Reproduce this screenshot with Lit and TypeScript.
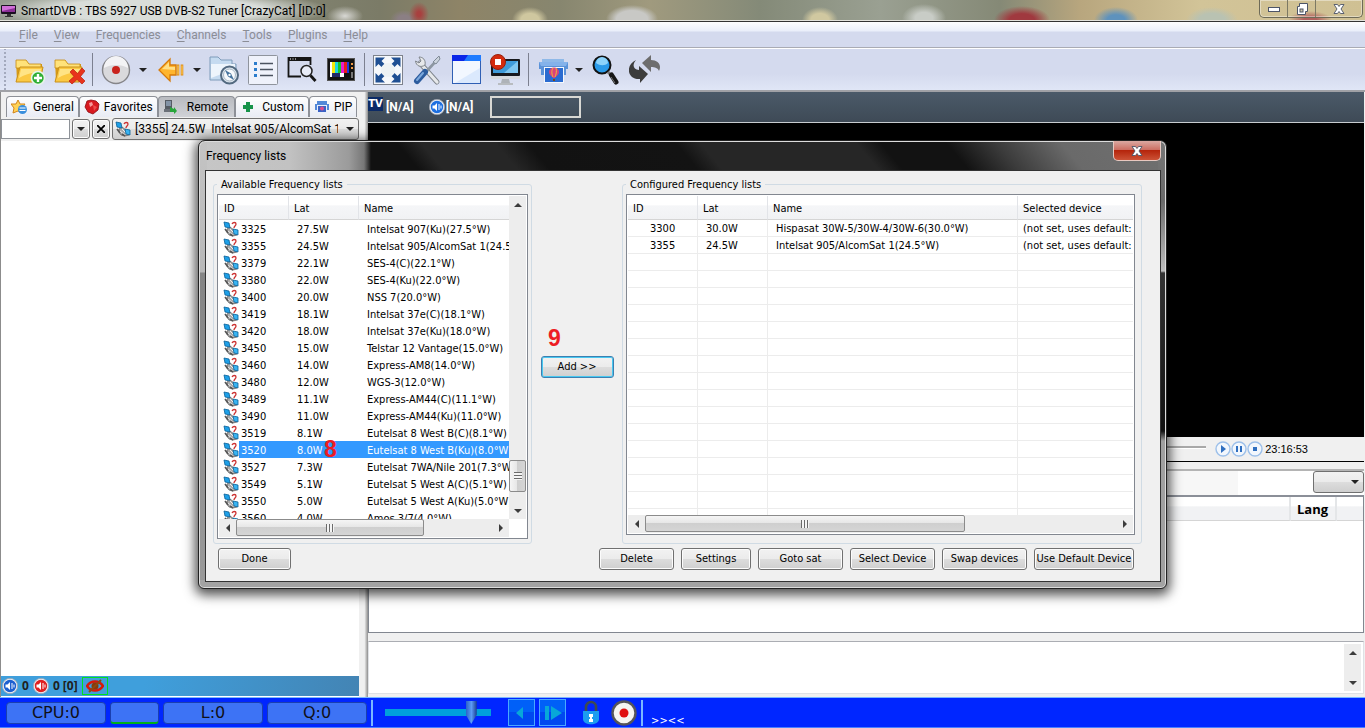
import { LitElement, html, css, svg, nothing, TemplateResult } from "lit";
import { customElement } from "lit/decorators.js";
import { classMap } from "lit/directives/class-map.js";

type Row = [string, string, string];

const AVAILABLE: Row[] = [
  ["3325", "27.5W", "Intelsat 907(Ku)(27.5°W)"],
  ["3355", "24.5W", "Intelsat 905/AlcomSat 1(24.5°W)"],
  ["3379", "22.1W", "SES-4(C)(22.1°W)"],
  ["3380", "22.0W", "SES-4(Ku)(22.0°W)"],
  ["3400", "20.0W", "NSS 7(20.0°W)"],
  ["3419", "18.1W", "Intelsat 37e(C)(18.1°W)"],
  ["3420", "18.0W", "Intelsat 37e(Ku)(18.0°W)"],
  ["3450", "15.0W", "Telstar 12 Vantage(15.0°W)"],
  ["3460", "14.0W", "Express-AM8(14.0°W)"],
  ["3480", "12.0W", "WGS-3(12.0°W)"],
  ["3489", "11.1W", "Express-AM44(C)(11.1°W)"],
  ["3490", "11.0W", "Express-AM44(Ku)(11.0°W)"],
  ["3519", "8.1W", "Eutelsat 8 West B(C)(8.1°W)"],
  ["3520", "8.0W", "Eutelsat 8 West B(Ku)(8.0°W)"],
  ["3527", "7.3W", "Eutelsat 7WA/Nile 201(7.3°W)"],
  ["3549", "5.1W", "Eutelsat 5 West A(C)(5.1°W)"],
  ["3550", "5.0W", "Eutelsat 5 West A(Ku)(5.0°W)"],
  ["3560", "4.0W", "Amos 3/7(4.0°W)"],
];

const CONFIGURED: Row[] = [
  ["3300", "30.0W", "Hispasat 30W-5/30W-4/30W-6(30.0°W)"],
  ["3355", "24.5W", "Intelsat 905/AlcomSat 1(24.5°W)"],
];

const EMPTY_ROWS = Array.from({ length: 16 });

const icon = (size: number, body: TemplateResult) =>
  html`<svg class="ico" width=${size} height=${size} viewBox="0 0 ${size} ${size}" aria-hidden="true">${body}</svg>`;

const satellite = () => icon(16, svg`
  <path d="M4 8l3-2 4 3 3 5-4 1-4-1-2-3z" fill="#a9a9a9" stroke="#666" stroke-width=".8"/>
  <path d="M5 10l5 4M7 8l5 5" stroke="#eee" stroke-width="1"/>
  <path d="M1 1l5 1 1 5-5-1z" fill="#1ea0e8" stroke="#0a5f96" stroke-width=".8"/>
  <path d="M10 8l5 1v5l-4-1z" fill="#39b4f2" stroke="#0a5f96" stroke-width=".8"/>
  <path d="M9 3c1-2 4-2 4 0s-2 2-2 4" fill="none" stroke="#c33" stroke-width="1.300"/>
  <path d="M2 8l3 4M7 13l3 2" stroke="#555" stroke-width="1.600"/>`);

const folder = svg`
  <path d="M2 6h10l3 4h13v18H3z" fill="#d99b14"/>
  <path d="M2 6h10l3 4h12v4H2z" fill="#ffe27a" stroke="#c58a10" stroke-width=".8"/>
  <path d="M2 28L6 13h23l-3 15z" fill="#fbc944" stroke="#c8901a"/>
  <path d="M5 24l2-9h20l-1 4c-8-1-14 1-21 5z" fill="#ffe486"/>`;

const icons = {
  folderAdd: icon(32, svg`${folder}
    <circle cx="24" cy="24" r="6.5" fill="#2fae35" stroke="#e8f4e8" stroke-width="1.6"/>
    <path d="M24 20v8M20 24h8" stroke="#fff" stroke-width="2.4"/>`),
  folderDelete: icon(32, svg`${folder}
    <path d="M17 18l3-3 4.500 4.500L29 14l3 3-4.500 5.500L32 27l-3 3-5-4.500L19 30l-3-3 5-4.500z" fill="#e8331c" stroke="#b81f10" stroke-width=".7"/>`),
  record: icon(32, svg`
    <circle cx="16" cy="16" r="13.500" fill="#d9d9dc" stroke="#858589" stroke-width="1.400"/>
    <path d="M4 14a12 12 0 0 1 24 0c-7-4-17-4-24 0z" fill="#f3f3f5"/>
    <circle cx="16" cy="16" r="4" fill="#c9231c"/>`),
  back: icon(32, svg`
    <path d="M5 16L16 5v6h6v10h-6v6z" fill="#ffb52e" stroke="#d67a0a" stroke-width="1.300"/>
    <path d="M8 15l7-7v5h6v3z" fill="#ffdf86"/>
    <path d="M24 10.500v11M28 10.500v11" stroke="#e08d14" stroke-width="2.600"/>
    <path d="M24 11.500v9M28 11.500v9" stroke="#ffd265"/>`),
  folderCompass: icon(32, svg`
    <path d="M2 3h8l3 3h11v4h4v16H2z" fill="#c5dbf0" stroke="#7f9cba"/>
    <path d="M3 10h24v5L3 24z" fill="#edf5fc"/>
    <circle cx="21.500" cy="21" r="8.500" fill="#dfe8f0" stroke="#536a80" stroke-width="2"/>
    <circle cx="21.500" cy="21" r="6" fill="#f7fafc" stroke="#a9b8c5"/>
    <path d="M17 16l6 3.500L26 26l-6-3.500z" fill="#46749e"/><circle cx="21.500" cy="21" r="1.200" fill="#fff"/>`),
  list: icon(32, svg`
    <rect x="1.500" y="1.500" width="29" height="29" rx="1" fill="#eff2fb" stroke="#8f949d"/>
    <path d="M7 8h3v3H7zM7 14h3v3H7zM7 20h3v3H7z" fill="#2b7ccc"/>
    <path d="M13 9.500h13M13 15.500h13M13 21.500h13" stroke="#4b5360" stroke-width="1.500"/>`),
  findWindow: icon(32, svg`
    <path d="M15 22.500H2.500V4h22v7" fill="none" stroke="#151515" stroke-width="1.800"/>
    <path d="M2 3h23v4H2z" fill="#151515"/><path d="M4 5h1M6.500 5h1M9 5h1" stroke="#fff"/>
    <circle cx="20.500" cy="17" r="5.500" fill="#e8ecf8" stroke="#222" stroke-width="1.500"/>
    <path d="M24.500 21.500l5 5.500" stroke="#151515" stroke-width="2.800"/>`),
  tv: icon(32, svg`
    <rect x="2.500" y="4.500" width="27" height="22" fill="#141414" stroke="#555"/>
    <rect x="5" y="8" width="19" height="15" fill="#fff"/>
    <path d="M7 8h3v11H7z" fill="#f4e90a"/><path d="M10 8h3v11h-3z" fill="#1fd5e0"/><path d="M13 8h3v11h-3z" fill="#18c52c"/>
    <path d="M16 8h3v11h-3z" fill="#e41bd0"/><path d="M19 8h3v11h-3z" fill="#ea1c1c"/><path d="M22 8h2v11h-2z" fill="#1f35e0"/>
    <path d="M7 19h8v4H7z" fill="#222a66"/><path d="M19 19h5v4h-5z" fill="#111"/><path d="M26 9h2v2h-2zM26 13h2v2h-2z" fill="#e94"/><path d="M26 18h2v6h-2z" fill="#777"/>`),
  fullscreen: icon(32, svg`
    <rect x="1.500" y="1.500" width="29" height="29" fill="#f6f8fb" stroke="#7d828c"/>
    <path d="M3.500 3.500H13l-3.500 3.500 3 3-3 3-3-3L3.500 13z" fill="#1f4f93"/>
    <path d="M28.500 3.500H19l3.500 3.500-3 3 3 3 3-3 3 3z" fill="#1f4f93"/>
    <path d="M3.500 28.500V19l3 3 3-3 3 3-3 3 3.500 3.500z" fill="#1f4f93"/>
    <path d="M28.500 28.500V19l-3 3-3-3-3 3 3 3-3.500 3.500z" fill="#1f4f93"/>
    <circle cx="16" cy="16" r="7" fill="#eef2f4"/>`),
  tools: icon(32, svg`
    <path d="M9 9L26 28" stroke="#7f858c" stroke-width="5" stroke-linecap="round"/>
    <path d="M9 9L26 28" stroke="#e6e8ea" stroke-width="3.200" stroke-linecap="round"/>
    <path d="M8 3c4 0 7 3 6 8-4 3-9 1-9.500-4l3.500 2 2-2z" fill="#e6e8ea" stroke="#7f858c"/>
    <path d="M26 6L14 19" stroke="#8d97a2" stroke-width="2.600"/>
    <path d="M28 2l1 3-4 5-3-2z" fill="#ccd4de" stroke="#7f8a96"/>
    <path d="M14 18L6 27" stroke="#2c5c9e" stroke-width="6" stroke-linecap="round"/>
    <path d="M12 19l-6 7" stroke="#7ba8dc" stroke-width="2" stroke-linecap="round"/>`),
  window: icon(32, svg`
    <rect x="2.500" y="1.500" width="28" height="28" fill="#f2f7ff" stroke="#2f5fb4"/>
    <path d="M2 1h29v6H2z" fill="#0a26e8"/><path d="M18 1h13v6H14z" fill="#1f7bff"/>
    <path d="M5 29L30 14v15z" fill="#dbe9fd"/>`),
  monitorStop: icon(32, svg`
    <rect x="2" y="5" width="29" height="17" rx="1" fill="#17191c"/>
    <path d="M4 7h25v12H4z" fill="#3f9bd8"/><path d="M29 7v12H15z" fill="#7fc6ee"/>
    <path d="M2 22h29v3H2z" fill="#d7dadd"/><path d="M13 25h7l1 4h-9z" fill="#aeb3b8"/><path d="M9 30h15" stroke="#b8bcc0" stroke-width="2"/>
    <circle cx="9" cy="8" r="7.500" fill="#d42b0d" stroke="#97200c"/><rect x="6" y="5" width="6" height="6" fill="#fff"/>`),
  pictures: icon(32, svg`
    <path d="M6 5h22v9H6z" fill="#8fb9e8"/><path d="M3 8h29v7h-2v6H5v-6H3z" fill="#5b92d8"/><path d="M3 8h29l-2 4H5z" fill="#84b2ea"/>
    <rect x="8.500" y="13.500" width="19" height="15" fill="#2a6bd0" stroke="#f5f8fc"/>
    <path d="M13 18a5 4.500 0 0 1 10 0c0 3-3 4-4 6h-2c-1-2-4-3-4-6z" fill="#d8437c"/><path d="M17 14c-2 3-1 7 0 9M20 14c1 3 0 7-1 9" stroke="#f2b53a" fill="none"/>
    <path d="M17 25h2v2h-2z" fill="#7a4a18"/>`),
  magnifier: icon(32, svg`
    <circle cx="12" cy="11" r="8.500" fill="#2a9ae8" stroke="#121212" stroke-width="2"/>
    <path d="M6 9a6 6 0 0 1 12 0c-3 3-8 3-12 0z" fill="#8cd3fa"/>
    <path d="M18 18l3 3" stroke="#777" stroke-width="3"/>
    <path d="M21.500 21l4.500 7" stroke="#161616" stroke-width="5" stroke-linecap="round"/><path d="M21 23l4 6" stroke="#777"/>`),
  sync: icon(32, svg`
    <path d="M13 9l9-8v5c7 0 11 5 8 11-1-3-4-4-8-4v5z" fill="#6d6d6d"/>
    <path d="M7 6c-4 5-3 9 3 10v-4l9 8-8 9v-4C-2 26-4 11 7 6z" fill="#3c3c3c"/>`),
};

const small = {
  star: icon(18, svg`<path d="M7 2l2 4 5 0-3 4 1 5-5-2-5 2 1-5-3-4h5z" fill="#ffd257" stroke="#d2851b"/><circle cx="11.500" cy="11.500" r="4.500" fill="#3a8fdd"/><path d="M8.500 10h6M8.500 12.500h6" stroke="#fff"/>`),
  shield: icon(16, svg`<path d="M3 2l4-1 5 1 3 3-1 6-5 4-5-2-3-5z" fill="#d81a20" stroke="#8c0a10" stroke-width=".8"/><path d="M5 4l3-1 1 3-3 2z" fill="#f79a9a"/><path d="M9 6l4 2-3 4z" fill="#f04a4a"/>`),
  remote: icon(16, svg`<rect x="2" y="1" width="7" height="9" fill="#555b63"/><path d="M3 2h5v5H3z" fill="#8393a6"/><path d="M1 10h9v3H1z" fill="#6c7179"/><path d="M7 8l4 2v-2l3 4-3 3v-2H7z" fill="#27a53a"/>`),
  plus: icon(16, svg`<path d="M6 3h4v3h3v4h-3v3H6v-3H3V6h3z" fill="#17934a"/>`),
  pip: icon(16, svg`<path d="M3 2h10v3h2v6H1V5h2z" fill="#5289d8"/><rect x="3.500" y="6.500" width="9" height="7" fill="#3b62c4" stroke="#e8effa"/><circle cx="8" cy="9.500" r="2" fill="#dc4f8d"/>`),
};

const speaker = (color: string, light: string) => icon(16, svg`
  <circle cx="8" cy="8" r="7" fill=${color} stroke="#eef2f8" stroke-width="1.600"/>
  <circle cx="8" cy="8" r="7.600" fill="none" stroke="#8a8f99" stroke-width=".6"/>
  <path d="M3.500 6.500h2L8 4v8L5.500 9.500h-2z" fill="#fff"/><path d="M10 5v6M12 6.500v3" stroke=${light}/>`);

const media = (label: string, glyph: TemplateResult) => html`<button class="media" aria-label=${label}>${icon(16, svg`
  <circle cx="8" cy="8" r="7" fill="#f2f7fd" stroke="#9dc0ea" stroke-width="1.400"/>${glyph}`)}</button>`;

const closeGlyph = html`<svg class="ico" width="12" height="10" viewBox="0 0 12 10" aria-hidden="true">
  <path d="M1 .5h3.500L6 2.500 7.500.5H11L8 5l3 4.500H7.500L6 7.500 4.500 9.500H1L4 5z" fill="#fff" stroke="#4d5568" stroke-width=".9"/></svg>`;

const scrollArrow = (d: string) => html`<button class="arrow" aria-label="Scroll"><svg class="ico" width="8" height="8" viewBox="0 0 8 8" aria-hidden="true"><path d=${d} fill="#3c3c3c"/></svg></button>`;
const UP = "M0 6l4-4 4 4z", DOWN = "M0 2h8L4 6z", LEFT = "M6 0v8L2 4z", RIGHT = "M2 0l4 4-4 4z";

@customElement("app-root")
export class AppRoot extends LitElement {
  static styles = css`
    :host {
      --seg: Roboto, "Open Sans", sans-serif;
      --tah: "DejaVu Sans Condensed", "Noto Sans", sans-serif;
      display: flex; flex-direction: column; position: relative;
      height: 100vh; overflow: hidden; box-sizing: border-box;
      font: 12px/16px var(--seg); color: #000; background: #f0f0f0;
    }
    * { box-sizing: border-box; }
    button, input, select { font: inherit; color: inherit; margin: 0; padding: 0; border-radius: 0; }
    button { border: 0; background: none; }
    .ico { display: block; flex: none; }
    .caret { flex: none; width: 0; height: 0; border: 4px solid transparent; border-top-color: #222; border-bottom: 0; }

    .titlebar {
      flex: none; height: 22px; display: flex; align-items: center; gap: 4px; padding-left: 1px;
      border-bottom: 1px solid #333; box-shadow: inset 0 -1px #e2e2dc;
      background:
        radial-gradient(ellipse 170px 20px at 160px 10px, #d9ddd9 60%, #d9ddd900),
        radial-gradient(ellipse 18px 10px at 345px 16px, #d8d8d4, #d8d8d400),
        radial-gradient(ellipse 10px 12px at 419px 14px, #a8403f 20%, #a8403f00),
        radial-gradient(ellipse 14px 9px at 404px 19px, #8b7f84 40%, #8b7f8400),
        radial-gradient(ellipse 18px 13px at 530px 20px, #cfc79f 50%, #cfc79f00),
        radial-gradient(ellipse 26px 14px at 632px 19px, #c8c8c5 60%, #c8c8c500),
        radial-gradient(ellipse 18px 13px at 820px 20px, #d0c8a0 50%, #d0c8a000),
        radial-gradient(ellipse 22px 14px at 924px 18px, #c8ccc6 40%, #c8ccc600),
        radial-gradient(ellipse 28px 14px at 1022px 20px, #a0393f 45%, #a0393f00),
        radial-gradient(ellipse 22px 13px at 1116px 20px, #5e92bd 40%, #5e92bd00),
        radial-gradient(ellipse 26px 13px at 1212px 20px, #b9c2b2 50%, #b9c2b200),
        radial-gradient(ellipse 22px 9px at 1310px 20px, #b0605c 30%, #b0605c00),
        linear-gradient(90deg, #959c8f, #7b7b67 380px, #8e8467 460px, #87866f 560px, #a09a7e 650px, #848a78 760px, #9aa092 880px, #858976 1000px, #b8a67e 1080px, #d2c498 1200px, #cfc093);
    }
    .titlebar h1 { font: inherit; margin: 0; flex: 1; white-space: nowrap; }
    .caption { display: flex; align-self: flex-start; height: 18px; margin-right: 2px; border: 1px solid #6d6a57; border-top: 0; border-radius: 0 0 5px 5px; box-shadow: inset 0 0 0 1px #ffffff66; }
    .caption button { width: 28px; display: grid; place-items: center; border-right: 1px solid #7c7964; }
    .caption button:last-child { width: 46px; border-right: 0; }

    .menubar {
      flex: none; height: 26px; display: flex; align-items: center; gap: 16px; padding-left: 19px;
      border-bottom: 1px solid #a9abb4; color: #8b8d96;
      background: linear-gradient(#fdfdff, #eaeffa 9px, #d4daee 10px, #d4daee);
    }
    .menubar a, .menubar a:visited { color: inherit; text-decoration: none; }
    .menubar u { text-underline-offset: 2px; }

    .toolbar {
      flex: none; height: 44px; display: flex; align-items: center; gap: 7px; padding-left: 14px;
      border-top: 1px solid #fff; border-bottom: 2px solid #a0a1a6;
      background:
        radial-gradient(circle, #a3a9bd 1px, transparent 1px) 3px 2px / 4px 4px repeat-y,
        linear-gradient(#d4daee 60%, #e0e6f6);
    }
    .toolbar button { display: grid; place-items: center; width: 32px; height: 34px; }
    .toolbar button.drop { width: 8px; }
    .sep { width: 1px; height: 33px; background: #7c8090; }

    main { flex: 1; min-height: 0; display: flex; }
    .side { flex: none; width: 359px; display: flex; flex-direction: column; padding-bottom: 1px; background: #fff; border-left: 1px solid #8c8c8c; }
    .tabs { flex: none; height: 25px; display: flex; align-items: flex-end; padding-left: 5px; background: #f0f0f0; }
    .tab { height: 21px; display: flex; align-items: center; gap: 4px; padding: 0 4px; border: 1px solid #8d9097; border-bottom: 0; border-radius: 4px 4px 0 0; background: linear-gradient(#fefefe, #e9ecf4); white-space: nowrap; }
    .tab.on { background: linear-gradient(#b9bbc0, #d0d2d7); gap: 8px; padding-right: 6px; }
    .tab.wide { gap: 6px; }
    .filter { flex: none; height: 24px; display: flex; align-items: center; gap: 2px; background: #f0f0f0; }
    .filter input { flex: none; width: 69px; height: 20px; border: 1px solid #8e9298; background: #fff; }
    .btn {
      flex: none; display: flex; align-items: center; justify-content: center; height: 22px; border: 1px solid #707070; border-radius: 3px;
      box-shadow: inset 0 0 0 1px #fcfcfc; background: linear-gradient(#f2f2f2, #ebebeb 49%, #dddddd 50%, #cfcfcf);
      font: 11px/16px var(--tah); white-space: nowrap;
    }
    .filter .btn { width: 18px; height: 20px; }
    .combo { flex: 1; min-width: 0; height: 22px; display: flex; align-items: center; gap: 4px; padding-left: 2px; border: 1px solid #707070; border-radius: 3px; background: linear-gradient(#f2f2f2, #ebebeb 49%, #dddddd 50%, #cfcfcf); }
    .combo select { flex: 1; width: 0; min-width: 0; height: 18px; appearance: none; border: 0; background: none; text-overflow: clip; }
    .combo .caret { margin: 0 4px; }
    .channels { flex: 1; }
    .counts { flex: none; height: 20px; display: flex; align-items: center; gap: 4px; padding-left: 1px; font: bold 12px/18px "Open Sans", sans-serif; color: #202020; background: linear-gradient(100deg, #3f9fdc 40%, #4384b4); }
    .eye { flex: none; width: 26px; height: 18px; display: grid; place-items: center; border: 1px solid #00e020; }

    .splitter { flex: none; width: 9px; background: linear-gradient(90deg, #f0f0f0 60%, #8d8d8d); }
    .right { flex: 1; min-width: 0; display: flex; flex-direction: column; padding-right: 1px; }
    .info { flex: none; height: 31px; display: flex; align-items: center; color: #fff; font-weight: 700; border-bottom: 1px solid #c8ccd0; background: linear-gradient(#4b5a69, #3e4a56); }
    .info .badge { width: 15px; height: 14px; margin-right: 3px; align-self: flex-start; margin-top: 5px; font: bold 10px/14px "DejaVu Sans", sans-serif; text-align: center; background: #0b2a66; }
    .info .ico { margin: 0 1px 0 15px; }
    .info .box { width: 91px; height: 22px; margin-left: 17px; border: 2px solid #d8d8d4; }
    .video { flex: 1; min-height: 40px; background: #000; }
    .player { flex: none; height: 25px; display: flex; align-items: center; padding-right: 56px; border-bottom: 1px solid #000; background: #f0f0f0; }
    .player .media { width: 16px; height: 16px; }
    .player time { font: 11px/16px "Liberation Sans", sans-serif; margin-left: 2px; }
    .seek { flex: 1; min-width: 0; height: 10px; margin: 0 9px 4px 0; appearance: none; background: linear-gradient(#a8a8a8, #a8a8a8) 0 4px / 100% 2px no-repeat, linear-gradient(#fff, #fff) 0 6px / 100% 1px no-repeat; }
    .seek::-webkit-slider-thumb { appearance: none; width: 10px; height: 10px; }
    .opts { margin-top: 7px; height: 26px; flex: none; display: flex; justify-content: flex-end; border-top: 2px solid #b4b4b4; background: linear-gradient(90deg, #f7f7f7 calc(100% - 126px), #fff 0); }
    .opts .combo { flex: none; width: 51px; }
    .tracks { flex: none; height: 138px; border: 1px solid #828790; border-top: 2px solid #8b8f98; background: #fff; }
    table { border-collapse: separate; border-spacing: 0; table-layout: fixed; width: 100%; }
    th, td { padding: 0; font-weight: 400; text-align: left; white-space: nowrap; overflow: hidden; }
    .tracks th { height: 24px; border-right: 2px solid #e4e6e8; border-bottom: 1px solid #d5d5d5; background: linear-gradient(#fff 40%, #f1f2f4 42%); font: bold 13px/16px "Open Sans", sans-serif; padding-left: 6px; }
    .tracks th:last-child { border-right: 0; }
    .log { flex: none; margin: 8px 0 3px; height: 53px; display: flex; justify-content: flex-end; padding: 2px; border: 1px solid #dfe1e5; border-top-color: #abadb3; background: #fff; }

    .statusbar { flex: none; height: 31px; display: flex; align-items: center; gap: 4px; padding: 0 6px; border-top: 1px solid #7ab8ff; border-bottom: 1px solid #4a80ff; background: #0026ff; }
    .meter { width: 100px; height: 22px; display: grid; place-items: center; border: 1px solid #1a3fb0; border-radius: 4px; background: #3d73f5; font: 16px/20px "DejaVu Sans", sans-serif; color: #101018; }
    .meter.bar { width: 49px; border-bottom: 2px solid #00b018; }
    .vsep { width: 2px; height: 26px; background: #7ab8ff; }
    .volume { width: 106px; height: 24px; margin: 0 13px 0 8px; appearance: none; background: linear-gradient(#00a0dc, #00a0dc) 0 8px / 100% 7px no-repeat; }
    .volume::-webkit-slider-thumb { appearance: none; width: 11px; height: 23px; background: linear-gradient(90deg, #2b62c8, #5b9bf5 50%, #183a90); clip-path: polygon(0 0, 100% 0, 100% 60%, 50% 100%, 0 60%); }
    .step { width: 27px; height: 27px; display: grid; place-items: center; border: 1px solid #4aa8ff; background: linear-gradient(#0060f8 50%, #0048f0 50%); }
    .lock { margin: 0 7px 0 12px; }
    .statusbar .tail { align-self: flex-end; margin-left: 4px; color: #fff; font: 10px/13px "DejaVu Sans", sans-serif; }

    .dialog {
      position: absolute; inset: 140px 198px 139px 198px; display: flex; flex-direction: column; padding: 0 5px 6px 6px;
      border: 1px solid #222; border-radius: 7px 7px 6px 6px;
      box-shadow: inset 0 0 0 1px #dcdcdc, 0 3px 12px 3px #000000b0;
      background:
        linear-gradient(#a3a3a3, #a3a3a3) 0 100% / 100% 8px no-repeat,
        linear-gradient(#c4c4c4, #b8b8b8 131px, #858585 132px, #9a9a9a) 0 0 / 8px 100% no-repeat,
        linear-gradient(#777, #6a6a6a 60px, #bdbdbd 130px, #333 132px, #111 290px, #a0a0a0 300px) 100% 0 / 8px 100% no-repeat,
        linear-gradient(90deg, #c6c6c6, #c2c2c2 90px, #9b9b9b 150px, #777 165px, #111) 0 0 / 172px 100% no-repeat,
        linear-gradient(50deg, #111 6%, #262626 9%, #262626 18%, #121212 22%, #131313 40%, #262626 43%, #262626 62%, #121212 65%, #121212 73%, #3b3b3b 79%, #6a6a6a 87%, #707070) 172px 0 / calc(100% - 172px) 30px no-repeat,
        #a3a3a3;
    }
    .dialog header { flex: none; height: 29px; display: flex; align-items: center; justify-content: space-between; padding-left: 1px; }
    .dialog h2 { font: inherit; margin: 0; }
    .close { align-self: flex-start; width: 48px; height: 20px; display: grid; place-items: center; border: 1px solid #e8c8c0; border-top: 0; border-radius: 0 0 5px 5px; background: linear-gradient(#dba9a2, #cc6c60 48%, #b5250c 50%, #cc5236); }
    .body { flex: 1; min-height: 0; display: flex; flex-direction: column; padding: 6px 18px 11px 7px; border: 1px solid #333; background: #f0f0f0; font: 11px/14px var(--tah); }
    .groups { flex: 1; min-height: 0; display: grid; grid-template-columns: 319px 90px minmax(0, 1fr); grid-template-rows: minmax(0, 1fr); }
    fieldset { margin: 0; min-width: 0; padding: 3px 3px 4px; display: flex; border: 1px solid #d0dbe4; border-radius: 3px; }
    fieldset.cfg { padding: 3px 6px 8px 3px; }
    legend { padding: 0 4px; height: 14px; line-height: 16px; }
    .listbox { flex: 1; min-width: 0; display: grid; grid-template: minmax(0, 1fr) 18px / minmax(0, 1fr) 17px; padding: 1px; border: 1px solid #828790; background: #fff; }
    .cfg .listbox { grid-template-columns: minmax(0, 1fr); }
    .view { overflow: hidden; min-height: 0; }
    .view th { height: 24px; padding: 2px 0 0 5px; border-right: 1px solid #e2e4e8; border-bottom: 1px solid #d5d5d5; background: linear-gradient(#fff 40%, #f5f6f8 42%, #f1f2f4); }
    .view td { height: 17px; line-height: 15px; padding: 1px 0 0 8px; }
    .view tr > :last-child { border-right: 0; }
    .view .c1 { width: 70px; }
    .view .c3 { width: 250px; }
    .avail td:first-child { padding-left: 4px; }
    .idcell { display: flex; gap: 2px; height: 16px; align-items: center; }
    .picked td { color: #fff; background: #3399ff; }
    .picked td:first-child { background: linear-gradient(90deg, #fff 20px, #3399ff 20px); }
    .cfg td { border-right: 1px solid #ececec; border-bottom: 1px solid #ececec; }
    .cfg td:first-child { padding-left: 22px; }
    .cfg td:last-child { padding-left: 5px; }
    .scroll { display: flex; background: #ededed; }
    .scroll.v { flex-direction: column; width: 17px; }
    .arrow { flex: none; width: 17px; height: 17px; display: grid; place-items: center; }
    .track { flex: 1; min-width: 0; min-height: 0; }
    .thumb { display: grid; place-items: center; border: 1px solid #8b8b8b; border-radius: 2px; background: linear-gradient(#f5f5f5, #e6e6e6 48%, #cfcfcf 50%, #d5d5d5); }
    .thumb.down { height: 32px; margin-bottom: 10px; }
    .thumb.near { width: 188px; }
    .thumb.far { width: 320px; }
    .h .thumb { height: 17px; }
    .v .thumb { background: linear-gradient(90deg, #f5f5f5, #e6e6e6 48%, #cfcfcf 50%, #d5d5d5); }
    .grip { width: 8px; height: 8px; background: repeating-linear-gradient(90deg, #6b6b6b 0 1px, #f5f5f5 1px 3px); }
    .v .grip { background: repeating-linear-gradient(#6b6b6b 0 1px, #f5f5f5 1px 3px); }
    .middle { position: relative; display: grid; place-items: center; padding-top: 12px; }
    .btn.add { width: 73px; border-color: #3c7fb1; box-shadow: inset 0 0 0 1px #48c8f0; }
    .mark { position: absolute; font: bold 23px/24px "Liberation Sans", sans-serif; color: #ed1c24; }
    .middle .mark { left: 16px; top: 149px; }
    .latcell { position: relative; }
    .view td.over { overflow: visible; }
    .latcell .mark { left: 27px; top: -6px; }
    .actions { flex: none; display: flex; gap: 7px; padding: 4px 8px 0 5px; }
    .actions .btn { width: 75px; }
    .actions .done { width: 73px; margin-right: auto; }
    .actions .set { width: 70px; }
    .actions .mid { width: 85px; }
    .actions .def { width: 100px; }
  `;

  private menu(label: string) {
    return html`<a href="#"><u>${label[0]}</u>${label.slice(1)}</a>`;
  }

  private availableRow([id, lat, name]: Row) {
    const picked = id === "3520";
    return html`<tr class=${classMap({ picked })}>
      <td><div class="idcell">${satellite()}${id}</div></td>
      <td class=${classMap({ over: picked })}><div class="latcell">${lat}${picked ? html`<span class="mark">8</span>` : nothing}</div></td>
      <td>${name}</td></tr>`;
  }

  private tool(label: string, body: TemplateResult, drop = false) {
    return html`<button aria-label=${label}>${body}</button>${drop
      ? html`<button class="drop" aria-label="${label} options"><span class="caret"></span></button>` : nothing}`;
  }

  render() {
    return html`
      <header class="titlebar">
        ${icon(16, svg`<rect x="0" y="2" width="15" height="9" rx="1" fill="#1a1020"/><path d="M1 3h13v6H1z" fill="#8a2f96"/><path d="M1 3h13v2L1 8z" fill="#d06fd8"/><path d="M6 11h4v2h2v1H4v-1h2z" fill="#333"/>`)}
        <h1>SmartDVB : TBS 5927 USB DVB-S2 Tuner [CrazyCat] [ID:0]</h1>
        <div class="caption">
          <button aria-label="Minimize"><svg class="ico" width="12" height="6"><rect x=".5" y="1.500" width="11" height="4" fill="#fff" stroke="#4d5568"/></svg></button>
          <button aria-label="Restore"><svg class="ico" width="12" height="12"><path d="M3.500.5h8v8h-2v3h-8v-8h2z" fill="#fff" stroke="#4d5568"/><rect x="4" y="6" width="3" height="3" fill="#cfc8a8" stroke="#4d5568"/></svg></button>
          <button aria-label="Close">${closeGlyph}</button>
        </div>
      </header>
      <nav class="menubar">${["File", "View", "Frequencies", "Channels", "Tools", "Plugins", "Help"].map((m) => this.menu(m))}</nav>
      <div class="toolbar">
        ${this.tool("Open list", icons.folderAdd)}${this.tool("Remove list", icons.folderDelete)}
        <span class="sep"></span>
        ${this.tool("Record", icons.record, true)}${this.tool("Back", icons.back, true)}
        ${this.tool("Schedule", icons.folderCompass)}${this.tool("Channel list", icons.list)}
        ${this.tool("Find", icons.findWindow)}${this.tool("TV", icons.tv)}
        <span class="sep"></span>
        ${this.tool("Fullscreen", icons.fullscreen)}${this.tool("Settings", icons.tools)}
        ${this.tool("Window", icons.window)}${this.tool("Stop display", icons.monitorStop)}
        <span class="sep"></span>
        ${this.tool("Snapshots", icons.pictures, true)}${this.tool("Search", icons.magnifier)}${this.tool("Refresh", icons.sync)}
      </div>

      <main>
        <section class="side">
          <div class="tabs">
            <button class="tab">${small.star}General</button>
            <button class="tab">${small.shield}Favorites</button>
            <button class="tab on">${small.remote}Remote</button>
            <button class="tab wide">${small.plus}Custom</button>
            <button class="tab">${small.pip}PIP</button>
          </div>
          <div class="filter">
            <input type="text" aria-label="Filter" />
            <button class="btn" aria-label="Filter history"><span class="caret"></span></button>
            <button class="btn" aria-label="Clear filter"><svg class="ico" width="8" height="8"><path d="M0 0l8 8M8 0L0 8" stroke="#000" stroke-width="1.800"/></svg></button>
            <div class="combo">${satellite()}
              <select aria-label="Satellite"><option>[3355] 24.5W&nbsp; Intelsat 905/AlcomSat 1(24.5°W)</option></select>
              <span class="caret"></span></div>
          </div>
          <div class="channels"></div>
          <div class="counts">
            ${speaker("#1d5fd0", "#fff")}<span>0</span>${speaker("#e02020", "#fff")}<span>0 [0]</span>
            <span class="eye"><svg class="ico" width="18" height="14"><path d="M1 7c4-6 12-6 16 0-4 6-12 6-16 0z" fill="none" stroke="#d81808" stroke-width="2.400"/><circle cx="9" cy="7" r="3.500" fill="#8a3a08"/><path d="M3 13L15 1" stroke="#8a4a10" stroke-width="2"/></svg></span>
          </div>
        </section>
        <div class="splitter"></div>
        <section class="right">
          <div class="info"><span class="badge">TV</span>[N/A]${speaker("#1d6fe0", "#fff")}[N/A]<span class="box"></span></div>
          <div class="video"></div>
          <div class="player">
            <input class="seek" type="range" aria-label="Position" />
            ${media("Play", svg`<path d="M6 4l5 4-5 4z" fill="#2f6fc0"/>`)}${media("Pause", svg`<path d="M5 5h2v6H5zM9 5h2v6H9z" fill="#2f6fc0"/>`)}${media("Stop", svg`<path d="M6 6h4v4H6z" fill="#2f6fc0"/>`)}
            <time>23:16:53</time>
          </div>
          <div class="opts"><div class="combo"><select aria-label="Track"><option></option></select><span class="caret"></span></div></div>
          <div class="tracks"><table>
            <colgroup><col /><col width="46" /><col width="26" /></colgroup>
            <thead><tr><th></th><th>Lang</th><th></th></tr></thead>
          </table></div>
          <div class="log"><div class="scroll v">${scrollArrow(UP)}<span class="track"></span>${scrollArrow(DOWN)}</div></div>
        </section>
      </main>

      <footer class="statusbar">
        <span class="meter">CPU:0</span><span class="meter bar"></span><span class="meter">L:0</span><span class="meter">Q:0</span>
        <span class="vsep"></span>
        <input class="volume" type="range" aria-label="Volume" value="85" />
        <button class="step" aria-label="Previous"><svg class="ico" width="18" height="14"><path d="M10 1v12L3 7z" fill="#08a8d8"/></svg></button>
        <button class="step" aria-label="Next"><svg class="ico" width="18" height="14"><path d="M1 0h4v14H1zM7 0l11 7-11 7z" fill="#08a8d8"/></svg></button>
        <span class="lock"><svg class="ico" width="18" height="26"><path d="M4 12V7a5 5 0 0 1 10 0v5" fill="none" stroke="#3d4a52" stroke-width="2.600"/><path d="M1 11h16v8c0 7-16 7-16 0z" fill="#1c9cf0"/><path d="M7 14h4v3h-1v2h1v3H7v-3h1v-2H7z" fill="#fff"/></svg></span>
        <span><svg class="ico" width="26" height="26"><circle cx="13" cy="13" r="11.500" fill="#f5f5f2" stroke="#55555a" stroke-width="2.400"/><circle cx="13" cy="13" r="4.500" fill="#e01010"/></svg></span>
        <span class="vsep"></span>
        <span class="tail">&gt;&gt;&lt;&lt;</span>
      </footer>

      <div class="dialog" role="dialog" aria-label="Frequency lists">
        <header><h2>Frequency lists</h2><button class="close" aria-label="Close">${closeGlyph}</button></header>
        <div class="body">
          <div class="groups">
            <fieldset class="avail">
              <legend>Available Frequency lists</legend>
              <div class="listbox">
                <div class="view"><table>
                  <colgroup><col class="c1" /><col class="c1" /><col /></colgroup>
                  <thead><tr><th>ID</th><th>Lat</th><th>Name</th></tr></thead>
                  <tbody>${AVAILABLE.map((r) => this.availableRow(r))}</tbody>
                </table></div>
                <div class="scroll v">${scrollArrow(UP)}<span class="track"></span><span class="thumb down"><span class="grip"></span></span>${scrollArrow(DOWN)}</div>
                <div class="scroll h">${scrollArrow(LEFT)}<span class="thumb near"><span class="grip"></span></span><span class="track"></span>${scrollArrow(RIGHT)}</div>
              </div>
            </fieldset>
            <div class="middle"><span class="mark">9</span><button class="btn add">Add &gt;&gt;</button></div>
            <fieldset class="cfg">
              <legend>Configured Frequency lists</legend>
              <div class="listbox">
                <div class="view"><table>
                  <colgroup><col class="c1" /><col class="c1" /><col class="c3" /><col /></colgroup>
                  <thead><tr><th>ID</th><th>Lat</th><th>Name</th><th>Selected device</th></tr></thead>
                  <tbody>
                    ${CONFIGURED.map(([id, lat, name]) => html`<tr><td>${id}</td><td>${lat}</td><td>${name}</td><td>(not set, uses default:</td></tr>`)}
                    ${EMPTY_ROWS.map(() => html`<tr><td></td><td></td><td></td><td></td></tr>`)}
                  </tbody>
                </table></div>
                <div class="scroll h">${scrollArrow(LEFT)}<span class="thumb far"><span class="grip"></span></span><span class="track"></span>${scrollArrow(RIGHT)}</div>
              </div>
            </fieldset>
          </div>
          <div class="actions">
            <button class="btn done">Done</button><button class="btn">Delete</button><button class="btn set">Settings</button>
            <button class="btn mid">Goto sat</button><button class="btn mid">Select Device</button><button class="btn mid">Swap devices</button>
            <button class="btn def">Use Default Device</button>
          </div>
        </div>
      </div>`;
  }
}
